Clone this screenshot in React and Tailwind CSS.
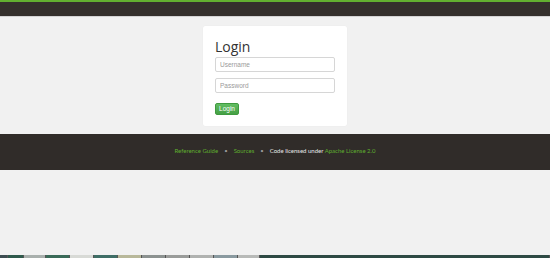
const strip = [
  ["w-[8px]", "bg-[#3d4d52]"],
  ["w-[16px]", "bg-[#2f5a4c]"],
  ["w-[22px]", "bg-[#a9b0ad]"],
  ["w-[24px]", "bg-[#3a6a58]"],
  ["w-[24px]", "bg-[#d8dad6]"],
  ["w-[24px]", "bg-[#3f6e66]"],
  ["w-[24px]", "bg-[#b8b89a]"],
  ["w-[24px]", "bg-[#8c9290]"],
  ["w-[24px]", "bg-[#9a9c9a]"],
  ["w-[24px]", "bg-[#b0b2b0]"],
  ["w-[24px]", "bg-[#8a9aa0]"],
  ["w-[22px]", "bg-[#b8bab8]"],
  ["flex-1", "bg-[#2e4a44]"],
];

const App = () => {
  return (
    <div
      className="flex flex-col h-screen bg-[#f1f1f1]"
      style={{ fontFamily: "Lato, 'Open Sans', sans-serif" }}
    >
      <div className="h-[2px] bg-[#62b030]" />
      <div className="h-[15px] bg-[#34302c] border-b border-[#d4d4d4]" />

      <div className="flex justify-center pt-[9px] pb-[8px]">
        <div className="w-[144px] h-[100px] bg-white rounded-[2px] shadow-[0_0_1px_rgba(0,0,0,0.08)] px-[12px] pt-[14px]">
          <p
            className="text-[14px] leading-none text-[#333]"
            style={{ fontFamily: "'Open Sans', sans-serif" }}
          >
            Login
          </p>
          <div className="flex flex-col gap-[6px] mt-[3px]">
            <input
              placeholder="Username"
              className="w-[120px] h-[15px] border border-[#d6d6d6] rounded-[2px] px-[4px] text-[6.5px] placeholder:text-[#9a9a9a] outline-none"
              style={{ fontFamily: "'Liberation Sans', sans-serif" }}
            />
            <input
              placeholder="Password"
              type="password"
              className="w-[120px] h-[15px] border border-[#d6d6d6] rounded-[2px] px-[4px] text-[6.5px] placeholder:text-[#9a9a9a] outline-none"
              style={{ fontFamily: "'Liberation Sans', sans-serif" }}
            />
          </div>
          <button
            className="mt-[9px] w-[24px] h-[12px] rounded-[2px] bg-gradient-to-b from-[#62bd62] to-[#45a045] border border-[#3f9a3f] text-white text-[6.5px] leading-none"
            style={{ fontFamily: "'Liberation Sans', sans-serif" }}
          >
            Login
          </button>
        </div>
      </div>

      <div className="h-[36px] bg-[#302c29] flex items-center justify-center gap-[6px] text-[6px] pb-[3px]">
        <span className="text-[#5fae2f]">Reference Guide</span>
        <span className="text-[#9a9a9a]">•</span>
        <span className="text-[#5fae2f]">Sources</span>
        <span className="text-[#9a9a9a]">•</span>
        <span className="text-[#e8e8e8]">
          Code licensed under{" "}
          <span className="text-[#5fae2f]">Apache License 2.0</span>
        </span>
      </div>

      <div className="mt-auto flex h-[3px]">
        {strip.map(([w, c], i) => (
          <div key={i} className={`${w} ${c} border-r border-[#555]`} />
        ))}
      </div>
    </div>
  );
};

export default App;
